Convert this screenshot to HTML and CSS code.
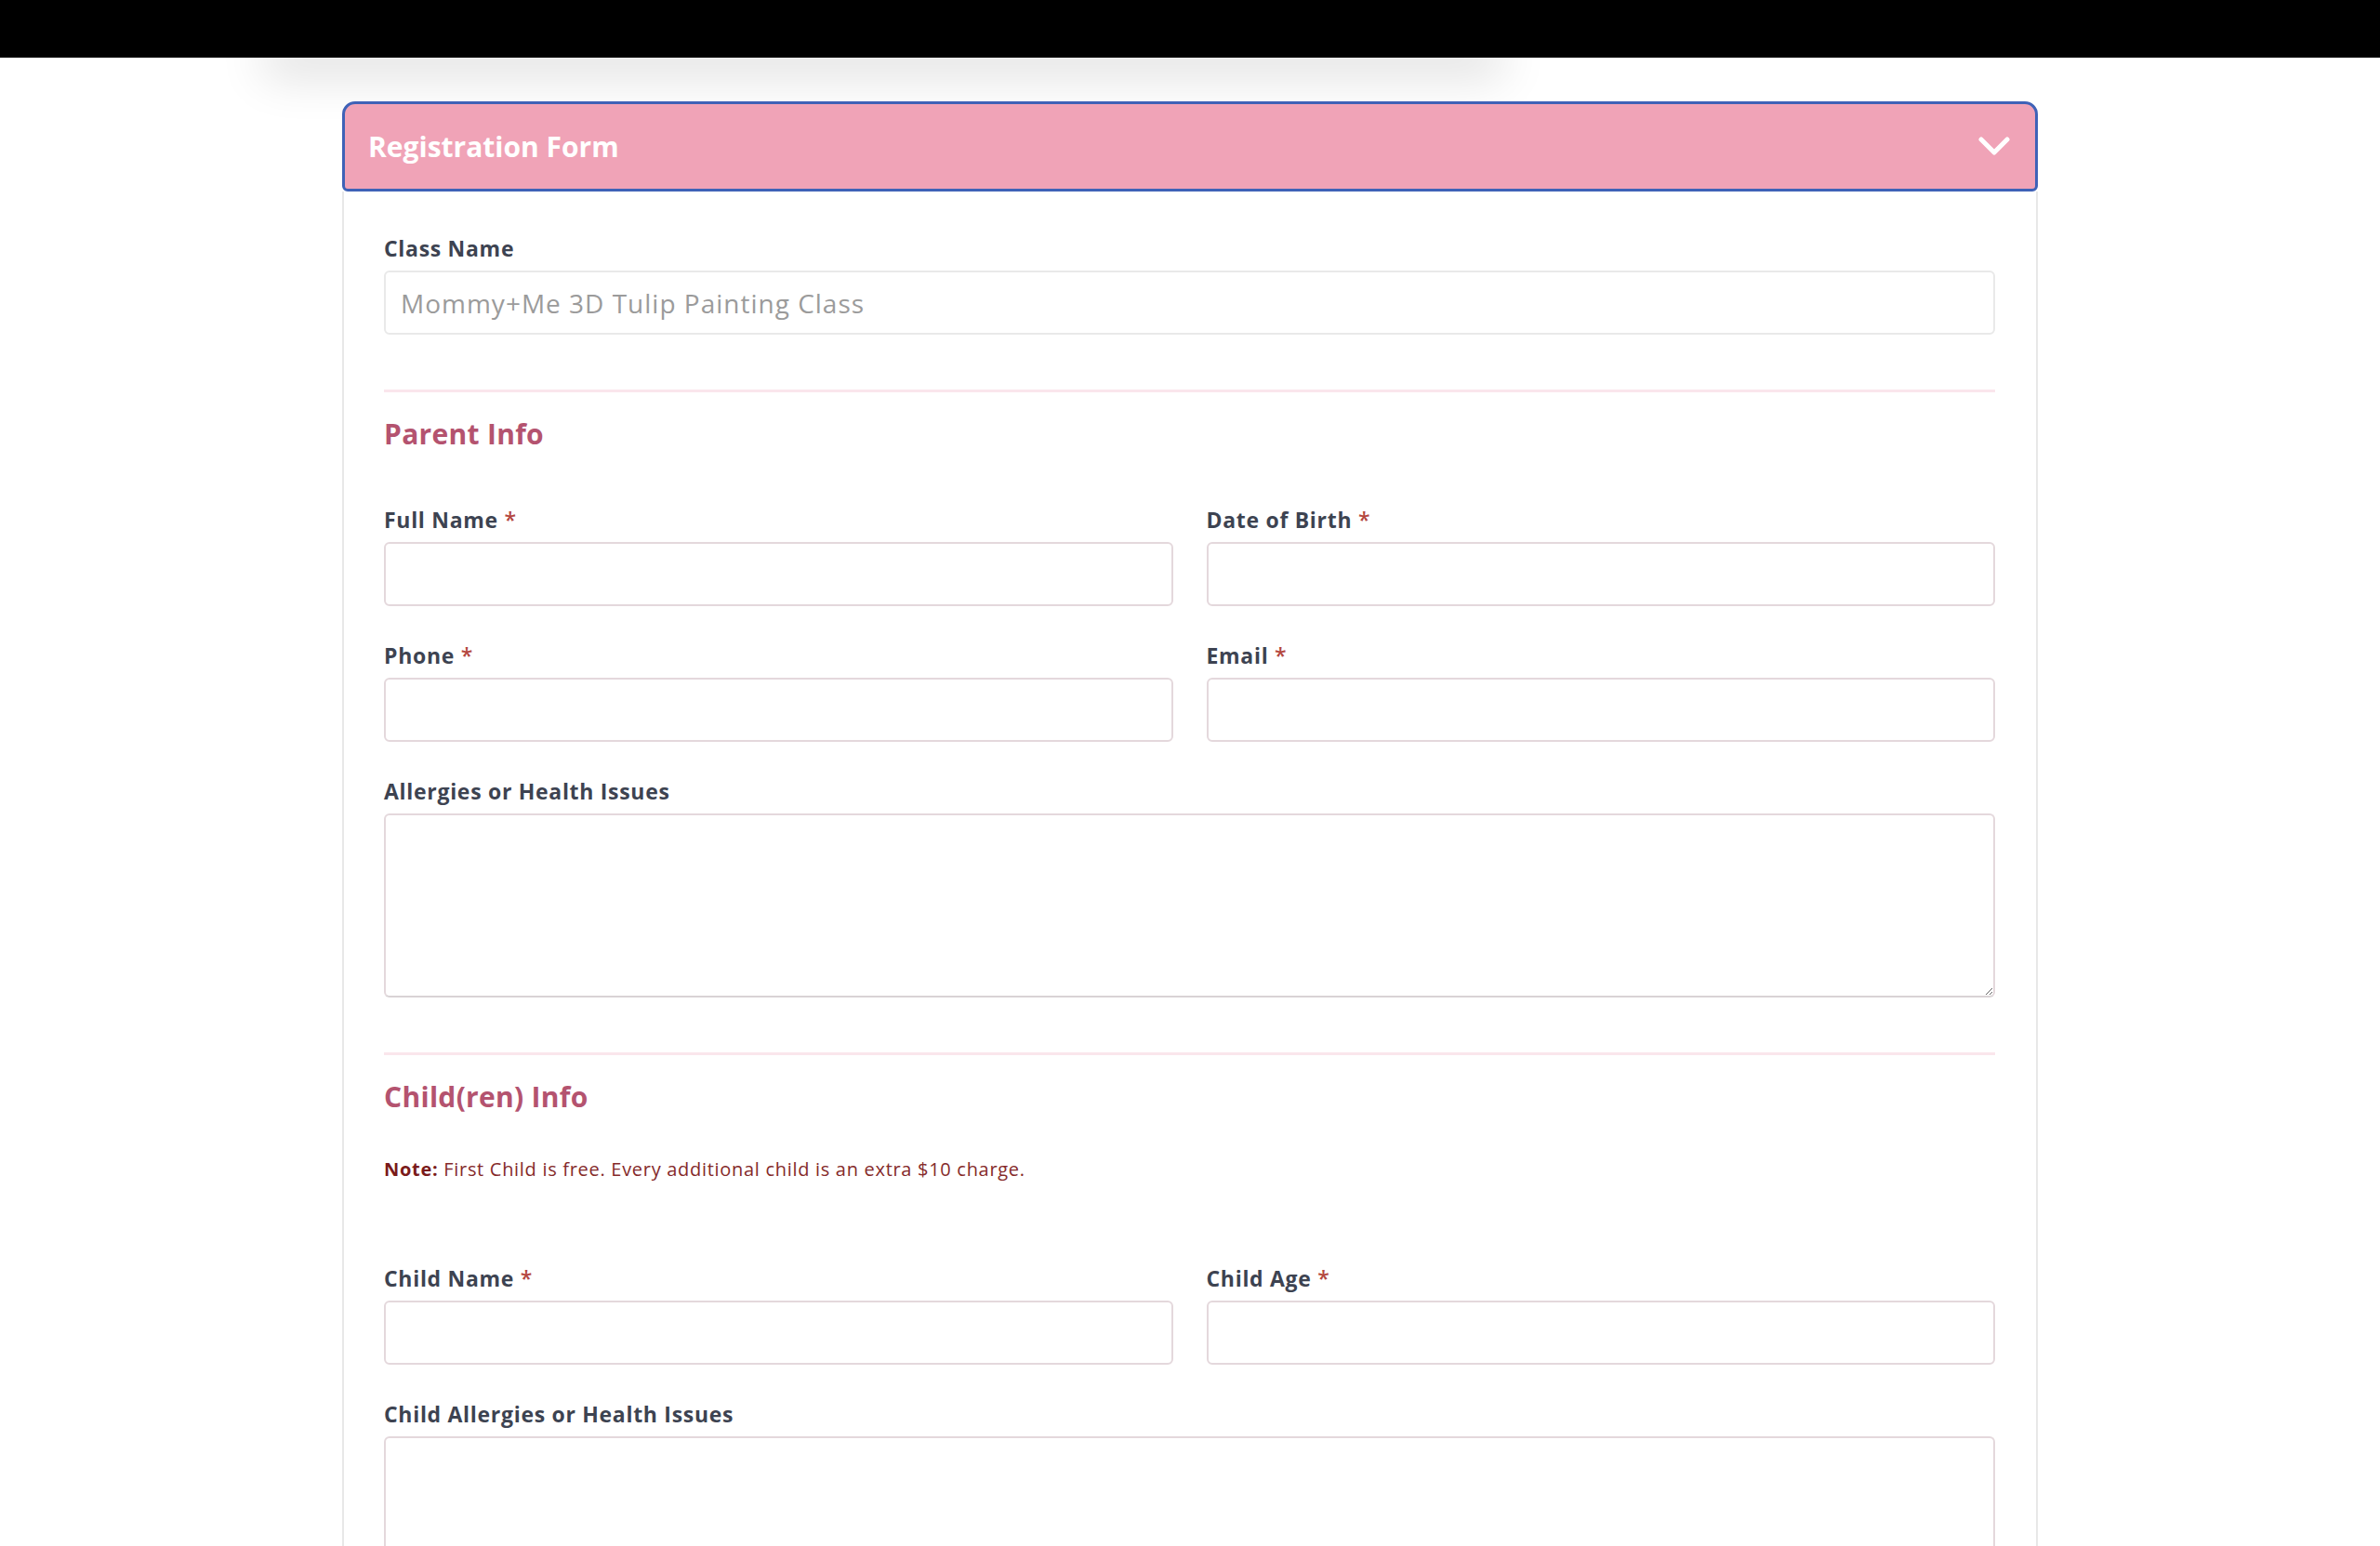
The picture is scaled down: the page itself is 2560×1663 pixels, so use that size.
FILE: index.html
```html
<!DOCTYPE html>
<html lang="en">
<head>
<meta charset="utf-8">
<title>Registration Form</title>
<link rel="stylesheet" href="styles.css">
</head>
<body>
<div class="viewport">
  <div class="topbar"></div>
  <div class="glow"></div>
  <section class="panel">
    <header class="panel-header">
      <h1 class="panel-title">Registration Form</h1>
      <svg class="chevron" width="34" height="21" viewBox="0 0 34 21" aria-hidden="true">
        <path d="M3 3 L17 17 L31 3" fill="none" stroke="#ffffff" stroke-width="5" stroke-linecap="round" stroke-linejoin="round"/>
      </svg>
    </header>
    <div class="panel-body">
      <div class="field">
        <label class="label" for="className">Class Name</label>
        <input class="input input-readonly" id="className" type="text" value="Mommy+Me 3D Tulip Painting Class" readonly>
      </div>

      <hr class="divider">
      <h2 class="section-title">Parent Info</h2>

      <div class="grid-two">
        <div class="field">
          <label class="label" for="fullName">Full Name <span class="req">*</span></label>
          <input class="input" id="fullName" type="text">
        </div>
        <div class="field">
          <label class="label" for="dob">Date of Birth <span class="req">*</span></label>
          <input class="input" id="dob" type="text">
        </div>
        <div class="field">
          <label class="label" for="phone">Phone <span class="req">*</span></label>
          <input class="input" id="phone" type="text">
        </div>
        <div class="field">
          <label class="label" for="email">Email <span class="req">*</span></label>
          <input class="input" id="email" type="text">
        </div>
      </div>

      <div class="field field-spaced">
        <label class="label" for="allergies">Allergies or Health Issues</label>
        <textarea class="textarea" id="allergies"></textarea>
      </div>

      <hr class="divider">
      <h2 class="section-title">Child(ren) Info</h2>

      <p class="note"><strong>Note:</strong> First Child is free. Every additional child is an extra $10 charge.</p>

      <div class="grid-two grid-child">
        <div class="field">
          <label class="label" for="childName">Child Name <span class="req">*</span></label>
          <input class="input" id="childName" type="text">
        </div>
        <div class="field">
          <label class="label" for="childAge">Child Age <span class="req">*</span></label>
          <input class="input" id="childAge" type="text">
        </div>
      </div>

      <div class="field field-spaced">
        <label class="label" for="childAllergies">Child Allergies or Health Issues</label>
        <textarea class="textarea" id="childAllergies"></textarea>
      </div>
    </div>
  </section>
</div>
</body>
</html>
```

FILE: styles.css
```css
* { box-sizing: border-box; }

html, body {
  margin: 0;
  padding: 0;
  background: #ffffff;
}

body {
  font-family: "Open Sans", "Noto Sans", sans-serif;
  color: #3c4250;
}

.viewport {
  height: 1663px;
  overflow: hidden;
}

.topbar {
  height: 62px;
  background: #000000;
}

.glow {
  height: 0;
  width: 1290px;
  margin-left: 305px;
  box-shadow: 0 0 50px 22px rgba(0, 0, 0, 0.12);
}

.panel {
  width: 1824px;
  margin: 47px auto 0;
}

.panel-header {
  height: 97px;
  background: #f0a3b7;
  border: 3px solid #3f62b7;
  border-radius: 14px 14px 6px 6px;
  display: flex;
  align-items: center;
  justify-content: space-between;
  padding: 0 27px 0 25px;
}

.panel-title {
  margin: 0;
  font-family: "Open Sans", sans-serif;
  font-weight: 700;
  font-size: 30px;
  line-height: 36px;
  color: #ffffff;
}

.chevron {
  display: block;
}

.panel-body {
  border-left: 2px solid #e8e8e8;
  border-right: 2px solid #e8e8e8;
  padding: 46px 44px 0 43px;
  min-height: 1600px;
}

.field {
  display: flex;
  flex-direction: column;
}

.field-spaced {
  margin-top: 38px;
}

.label {
  font-family: "Open Sans", sans-serif;
  font-weight: 700;
  font-size: 23px;
  line-height: 30px;
  letter-spacing: 0.7px;
  color: #3d4351;
  margin-bottom: 9px;
}

.req {
  color: #b4473f;
  font-weight: 600;
}

.input {
  display: block;
  width: 100%;
  height: 69px;
  border: 2px solid #e4d8dc;
  border-radius: 6px;
  background: #ffffff;
  padding: 0 16px;
  font-family: "Open Sans", sans-serif;
  font-size: 28px;
  letter-spacing: 1px;
  color: #3c4250;
  outline: none;
}

.input-readonly {
  border-color: #e9e9e9;
  color: #9b9b9b;
}

.textarea {
  display: block;
  width: 100%;
  height: 198px;
  border: 2px solid #e4d8dc;
  border-bottom-color: #d9d3d5;
  border-radius: 6px;
  background: #ffffff;
  padding: 12px 16px;
  font-family: "Open Sans", sans-serif;
  font-size: 22px;
  outline: none;
  resize: vertical;
}

.divider {
  border: 0;
  height: 3px;
  background: #fae6ec;
  margin: 60px 0 27px;
}

.field + .divider,
.field-spaced + .divider {
  margin-top: 59px;
}

.section-title {
  margin: 0;
  font-family: "Open Sans", sans-serif;
  font-weight: 700;
  font-size: 30px;
  line-height: 36px;
  letter-spacing: 0.3px;
  color: #b4536f;
}

.grid-two {
  display: grid;
  grid-template-columns: 1fr 1fr;
  column-gap: 36px;
  row-gap: 38px;
  margin-top: 59px;
}

.grid-child {
  margin-top: 88px;
}

.note {
  margin: 46px 0 0;
  font-family: "Open Sans", sans-serif;
  font-size: 20px;
  line-height: 28px;
  letter-spacing: 0.7px;
  color: #852a2a;
}

.note strong {
  color: #7a1a1a;
  font-weight: 700;
}
```
